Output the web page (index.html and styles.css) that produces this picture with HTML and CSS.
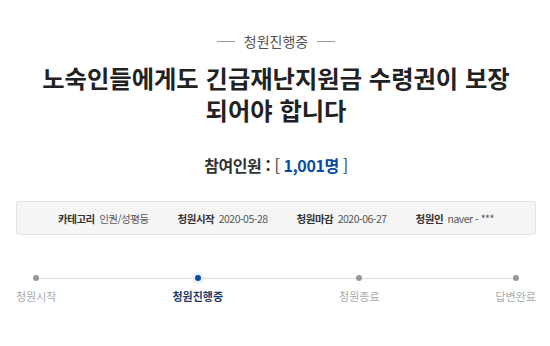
FILE: index.html
```html
<!DOCTYPE html>
<html lang="ko">
<head>
    <meta charset="UTF-8">
    <meta name="viewport" content="width=device-width, initial-scale=1.0">
    <title>청원진행중</title>
    <link rel="stylesheet" href="styles.css">
</head>
<body>
    <div class="petition">
        <div class="status"><span class="status-text">청원진행중</span></div>
        <h1 class="title">
            <span class="title-line">노숙인들에게도 긴급재난지원금 수령권이 보장</span>
            <span class="title-line">되어야 합니다</span>
        </h1>
        <h2 class="count">참여인원 : <span class="bracket">[ <span class="num">1,001명</span> ]</span></h2>

        <ul class="info">
            <li><strong>카테고리</strong> 인권/성평등</li>
            <li><strong>청원시작</strong> 2020-05-28</li>
            <li><strong>청원마감</strong> 2020-06-27</li>
            <li><strong>청원인</strong> naver - ***</li>
        </ul>

        <div class="steps">
            <div class="step"><span class="dot"></span><span class="label">청원시작</span></div>
            <div class="step current"><span class="dot"></span><span class="label">청원진행중</span></div>
            <div class="step"><span class="dot"></span><span class="label">청원종료</span></div>
            <div class="step"><span class="dot"></span><span class="label">답변완료</span></div>
        </div>
    </div>
</body>
</html>
```

FILE: styles.css
```css
body {
    margin: 0;
    font-family: "Noto Sans CJK KR", "Noto Sans", sans-serif;
    background-color: #ffffff;
    color: #333333;
}
.petition {
    padding: 30px 14px 0 16px;
}
.status {
    display: flex;
    justify-content: center;
    align-items: center;
    gap: 9px;
    font-size: 14px;
    color: #555555;
    line-height: 22px;
}
.status::before, .status::after {
    content: "";
    width: 18px;
    height: 1px;
    background-color: #999999;
}
.title {
    margin: 10px 0 0 0;
    display: flex;
    flex-direction: column;
    align-items: center;
    font-size: 24.3px;
    line-height: 32px;
    font-weight: bold;
    color: #222222;
}
.title-line {
    display: block;
    height: 32px;
}
.count {
    margin: 27px 0 0 0;
    text-align: center;
    font-size: 16px;
    line-height: 24px;
    font-weight: bold;
    letter-spacing: -0.4px;
    color: #333333;
}
.bracket {
    font-weight: normal;
}
.num {
    color: #0a4a9f;
    font-weight: bold;
}
.info {
    list-style: none;
    box-sizing: border-box;
    margin: 24px 0 0 0;
    padding: 0;
    height: 34px;
    display: flex;
    justify-content: center;
    align-items: center;
    gap: 29px;
    background-color: #f5f5f5;
    border: 1px solid #e2e2e2;
    border-radius: 3px;
    font-size: 10.5px;
    color: #555555;
    letter-spacing: -0.5px;
}
.info li {
    white-space: nowrap;
}
.info strong {
    color: #333333;
    margin-right: 2px;
}
.steps {
    position: relative;
    display: flex;
    justify-content: space-between;
    margin-top: 40px;
}
.steps::before {
    content: "";
    position: absolute;
    left: 18px;
    right: 18px;
    top: 3px;
    height: 1px;
    background-color: #dddddd;
}
.step {
    display: flex;
    flex-direction: column;
    align-items: center;
    gap: 8px;
}
.dot {
    position: relative;
    width: 6px;
    height: 6px;
    border-radius: 50%;
    background-color: #999999;
}
.label {
    font-size: 11px;
    line-height: 14px;
    color: #aaaaaa;
}
.current .dot {
    background-color: #0a4a9f;
    box-shadow: 0 0 0 3px #e8f0fa;
}
.current .label {
    color: #1d3c6a;
    font-weight: bold;
}
```
